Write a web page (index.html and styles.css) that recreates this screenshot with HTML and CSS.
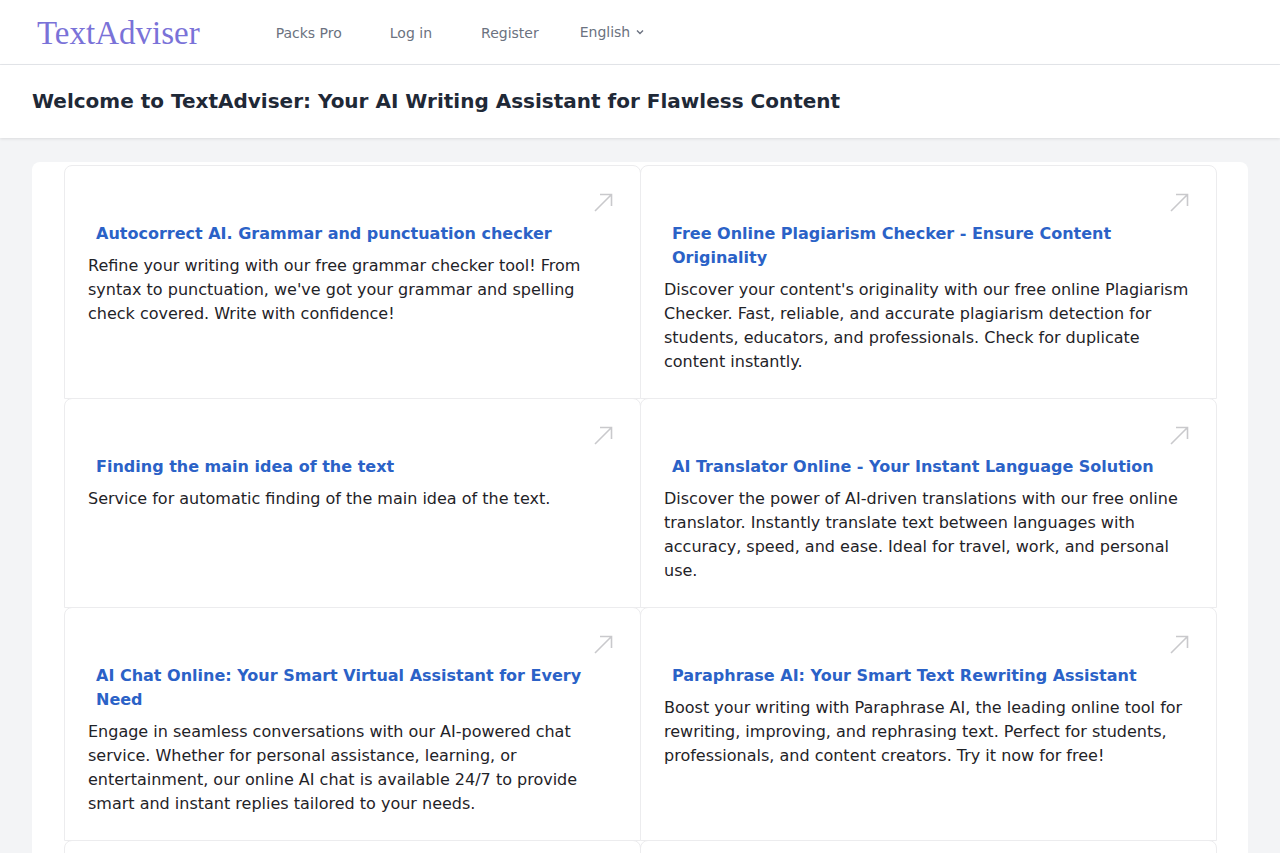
FILE: index.html
```html
<!DOCTYPE html>
<html lang="en">
<head>
    <meta charset="UTF-8">
    <meta name="viewport" content="width=device-width, initial-scale=1.0">
    <title>TextAdviser</title>
    <link rel="stylesheet" href="styles.css">
</head>
<body>
    <nav class="topbar">
        <a class="logo" href="#">TextAdviser</a>
        <div class="menu">
            <a href="#" class="menu-item">Packs Pro</a>
            <a href="#" class="menu-item">Log in</a>
            <a href="#" class="menu-item reg">Register</a>
            <a href="#" class="menu-item lang">English
                <svg width="10" height="10" viewBox="0 0 10 10"><path d="M2 3.5 L5 6.5 L8 3.5" fill="none" stroke="#6b7280" stroke-width="1.4"/></svg>
            </a>
        </div>
    </nav>

    <header class="page-head">
        <h1>Welcome to TextAdviser: Your AI Writing Assistant for Flawless Content</h1>
    </header>

    <main class="wrap">
        <div class="grid">
            <div class="card">
                <div class="card-top"><svg class="arrow" width="22" height="22" viewBox="0 0 22 22"><path d="M3 20 L19 4 M8 3.5 H19.5 V15" fill="none" stroke="#c9c9cc" stroke-width="1.6"/></svg></div>
                <h3>Autocorrect AI. Grammar and punctuation checker</h3>
                <p>Refine your writing with our free grammar checker tool! From syntax to punctuation, we've got your grammar and spelling check covered. Write with confidence!</p>
            </div>
            <div class="card">
                <div class="card-top"><svg class="arrow" width="22" height="22" viewBox="0 0 22 22"><path d="M3 20 L19 4 M8 3.5 H19.5 V15" fill="none" stroke="#c9c9cc" stroke-width="1.6"/></svg></div>
                <h3>Free Online Plagiarism Checker - Ensure Content Originality</h3>
                <p>Discover your content's originality with our free online Plagiarism Checker. Fast, reliable, and accurate plagiarism detection for students, educators, and professionals. Check for duplicate content instantly.</p>
            </div>
            <div class="card">
                <div class="card-top"><svg class="arrow" width="22" height="22" viewBox="0 0 22 22"><path d="M3 20 L19 4 M8 3.5 H19.5 V15" fill="none" stroke="#c9c9cc" stroke-width="1.6"/></svg></div>
                <h3>Finding the main idea of the text</h3>
                <p>Service for automatic finding of the main idea of the text.</p>
            </div>
            <div class="card">
                <div class="card-top"><svg class="arrow" width="22" height="22" viewBox="0 0 22 22"><path d="M3 20 L19 4 M8 3.5 H19.5 V15" fill="none" stroke="#c9c9cc" stroke-width="1.6"/></svg></div>
                <h3>AI Translator Online - Your Instant Language Solution</h3>
                <p>Discover the power of AI-driven translations with our free online translator. Instantly translate text between languages with accuracy, speed, and ease. Ideal for travel, work, and personal use.</p>
            </div>
            <div class="card">
                <div class="card-top"><svg class="arrow" width="22" height="22" viewBox="0 0 22 22"><path d="M3 20 L19 4 M8 3.5 H19.5 V15" fill="none" stroke="#c9c9cc" stroke-width="1.6"/></svg></div>
                <h3>AI Chat Online: Your Smart Virtual Assistant for Every Need</h3>
                <p>Engage in seamless conversations with our AI-powered chat service. Whether for personal assistance, learning, or entertainment, our online AI chat is available 24/7 to provide smart and instant replies tailored to your needs.</p>
            </div>
            <div class="card">
                <div class="card-top"><svg class="arrow" width="22" height="22" viewBox="0 0 22 22"><path d="M3 20 L19 4 M8 3.5 H19.5 V15" fill="none" stroke="#c9c9cc" stroke-width="1.6"/></svg></div>
                <h3>Paraphrase AI: Your Smart Text Rewriting Assistant</h3>
                <p>Boost your writing with Paraphrase AI, the leading online tool for rewriting, improving, and rephrasing text. Perfect for students, professionals, and content creators. Try it now for free!</p>
            </div>
            <div class="card card-empty"></div>
            <div class="card card-empty"></div>
        </div>
    </main>
</body>
</html>
```

FILE: styles.css
```css
body {
    margin: 0;
    font-family: "DejaVu Sans", sans-serif;
    background-color: #f3f4f6;
    color: #1f2328;
}

a {
    text-decoration: none;
}

.topbar {
    height: 64px;
    background: white;
    border-bottom: 1px solid #e5e7eb;
    display: flex;
    align-items: center;
    padding-left: 37px;
}

.logo {
    font-family: "Liberation Serif", serif;
    font-size: 33px;
    color: #7a72d8;
    margin-top: 2px;
}

.menu {
    display: flex;
    align-items: center;
    margin-left: 76px;
    margin-top: 2px;
}

.menu-item {
    font-size: 14px;
    color: #6b7280;
    margin-right: 48px;
}

.menu-item.reg {
    margin-left: 1px;
}

.menu-item.lang {
    margin-right: 0;
    margin-left: -7px;
    margin-top: -2px;
    display: flex;
    align-items: center;
    gap: 5px;
}

.page-head {
    background: white;
    height: 73px;
    display: flex;
    align-items: center;
    padding-left: 32px;
    box-shadow: 0 1px 3px rgba(0, 0, 0, 0.1);
}

.page-head h1 {
    margin: -2px 0 0;
    font-size: 20px;
    font-weight: bold;
    color: #1f2937;
}

.wrap {
    margin: 24px 32px 0;
    background: white;
    border-radius: 8px;
    padding: 3px 32px 0;
}

.grid {
    display: grid;
    grid-template-columns: 1fr 1fr;
}

.card {
    border: 1px solid #ececee;
    border-radius: 8px 8px 0 0;
    margin: 0 -1px -1px 0;
    padding: 24px 24px 24px 23px;
}

.card-empty {
    height: 120px;
}

.card-top {
    height: 24px;
    display: flex;
    justify-content: flex-end;
    padding-right: 2px;
}

.arrow {
    margin-top: 1px;
}

.card h3 {
    margin: 8px 0 8px 8px;
    font-size: 16px;
    line-height: 24px;
    color: #2b62c7;
}

.card p {
    margin: 0;
    font-size: 16px;
    line-height: 24px;
}
```
